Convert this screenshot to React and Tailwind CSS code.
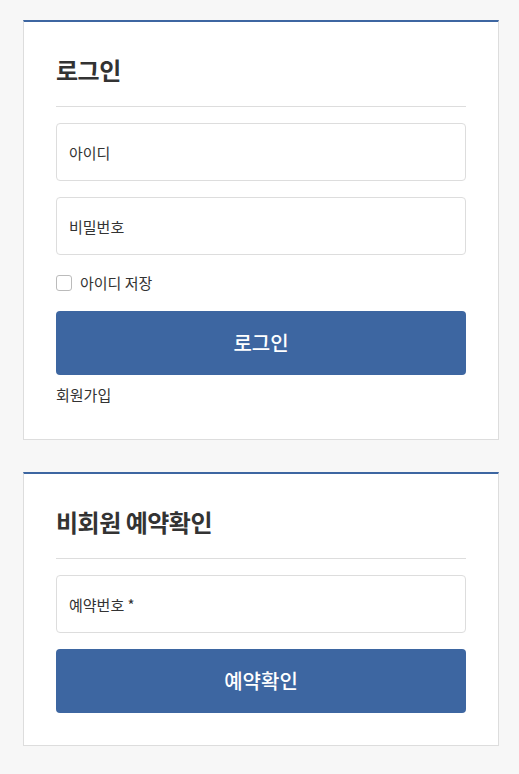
const Card = ({ title, children }) => (
  <section className="bg-white border border-[#dddddd] border-t-2 border-t-[#3d66a1] px-8 pt-8 pb-8">
    <h2 className="text-[24px] leading-8 font-bold text-[#333333] pb-5 border-b border-[#dddddd] tracking-[-0.5px]">
      {title}
    </h2>
    <div className="pt-4">{children}</div>
  </section>
);

const Field = ({ placeholder }) => (
  <input
    type="text"
    placeholder={placeholder}
    className="w-full h-[58px] border border-[#dddddd] rounded-[4px] px-3 text-[15px] text-[#333333] placeholder:text-[#333333] outline-none"
  />
);

const PrimaryButton = ({ children }) => (
  <button className="w-full h-16 bg-[#3d66a1] rounded-[4px] text-white text-[20px] font-medium">
    {children}
  </button>
);

export default function App() {
  return (
    <div
      className="min-h-screen bg-[#f7f7f7] pl-[23px] pr-5 pt-5 pb-[29px] flex flex-col gap-8"
      style={{ fontFamily: '"Noto Sans CJK KR", "Noto Sans", sans-serif' }}
    >
      <Card title="로그인">
        <div className="flex flex-col gap-4">
          <Field placeholder="아이디" />
          <Field placeholder="비밀번호" />
        </div>
        <label className="flex items-center gap-2 my-4 h-6 text-[15px] text-[#333333]">
          <span className="w-4 h-4 border border-[#bbbbbb] rounded-[3px] bg-white" />
          아이디 저장
        </label>
        <PrimaryButton>로그인</PrimaryButton>
        <p className="mt-2 leading-6 text-[15px] text-[#333333]">회원가입</p>
      </Card>

      <Card title="비회원 예약확인">
        <div className="flex flex-col gap-4">
          <Field placeholder="예약번호 *" />
          <PrimaryButton>예약확인</PrimaryButton>
        </div>
      </Card>
    </div>
  );
}
